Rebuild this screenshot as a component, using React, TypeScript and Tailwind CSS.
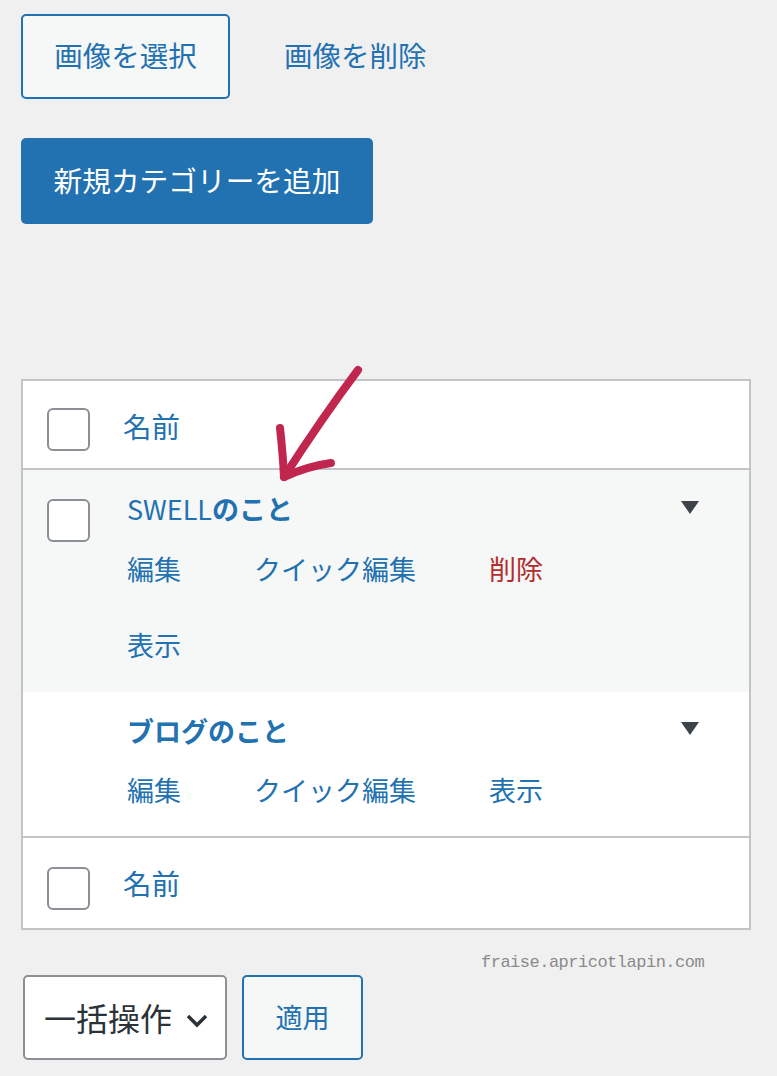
import React from "react";

const font = { fontFamily: '"Noto Sans CJK JP", "Noto Sans", sans-serif' };

function Checkbox() {
  return <div className="w-[43px] h-[43px] border-2 border-[#8c8f94] rounded-[6px] bg-white shrink-0" />;
}

function Triangle() {
  return (
    <div className="absolute right-[50px] w-0 h-0 border-l-[9px] border-r-[9px] border-t-[13px] border-l-transparent border-r-transparent border-t-[#3c434a]" />
  );
}

export default function App() {
  return (
    <div style={font} className="relative w-[777px] min-h-[1076px] bg-[#f0f0f1] pl-[21px] pt-[14px] pb-[16px]">
      {/* top buttons */}
      <div className="flex items-center">
        <button className="w-[209px] h-[85px] rounded-[5px] border-2 border-[#2271b1] bg-[#f6f7f7] text-[#2271b1] text-[28.5px] leading-none pb-[3px]">
          画像を選択
        </button>
        <span className="ml-[54px] text-[#2271b1] text-[28.5px] leading-none -mt-[3px]">画像を削除</span>
      </div>
      <button className="mt-[39px] w-[352px] h-[86px] rounded-[5px] bg-[#2271b1] text-white text-[28.7px] leading-none pb-[2px]">
        新規カテゴリーを追加
      </button>

      {/* table */}
      <div className="mt-[155px] w-[730px] border-2 border-[#c3c4c7] bg-white">
        <div className="h-[89px] flex items-start pt-[27px] pl-[24px] border-b-2 border-[#c3c4c7]">
          <Checkbox />
          <span className="ml-[33px] mt-[4px] text-[#2271b1] text-[28.5px] leading-none">名前</span>
        </div>

        {/* row 1 */}
        <div className="relative flex bg-[#f6f7f7] h-[222px] pl-[24px]">
          <div className="pt-[29px]">
            <Checkbox />
          </div>
          <div className="ml-[37px] pt-[18px] flex flex-col">
            <div className="h-[40px] flex items-center text-[#2271b1] text-[27px] leading-none">
              <span className="font-normal">SWELL</span>
              <span className="font-bold">のこと</span>
            </div>
            <div className="mt-[20px] h-[40px] flex items-center text-[27px] leading-none gap-[73px]">
              <span className="text-[#2271b1]">編集</span>
              <span className="text-[#2271b1]">クイック編集</span>
              <span className="text-[#b32d2e]">削除</span>
            </div>
            <div className="mt-[36px] h-[40px] flex items-center text-[27px] leading-none text-[#2271b1]">
              表示
            </div>
          </div>
          <div className="absolute top-[31px] right-0">
            <Triangle />
          </div>
        </div>

        {/* row 2 */}
        <div className="relative flex bg-white h-[146px] pl-[104px] border-b-2 border-[#c3c4c7]">
          <div className="pt-[18px] flex flex-col">
            <div className="h-[40px] flex items-center text-[#2271b1] text-[27px] leading-none font-bold">
              ブログのこと
            </div>
            <div className="mt-[19px] h-[40px] flex items-center text-[27px] leading-none gap-[73px] text-[#2271b1]">
              <span>編集</span>
              <span>クイック編集</span>
              <span>表示</span>
            </div>
          </div>
          <div className="absolute top-[30px] right-0">
            <Triangle />
          </div>
        </div>

        <div className="h-[90px] flex items-start pt-[29px] pl-[24px]">
          <Checkbox />
          <span className="ml-[33px] mt-[2px] text-[#2271b1] text-[28.5px] leading-none">名前</span>
        </div>
      </div>

      {/* bulk actions */}
      <div className="mt-[45px] flex items-center pl-[2px]">
        <div className="w-[204px] h-[85px] border-2 border-[#8c8f94] rounded-[5px] bg-white flex items-center pl-[19px] pr-[16px] justify-between">
          <span className="text-[#2c3338] text-[32px] leading-none -mt-[2px]">一括操作</span>
          <svg width="24" height="18" viewBox="0 0 24 18" className="mt-[5px]">
            <path d="M3 5 L12 14 L21 5" fill="none" stroke="#2c3338" strokeWidth="3.5" />
          </svg>
        </div>
        <button className="ml-[15px] w-[121px] h-[85px] border-2 border-[#2271b1] rounded-[5px] bg-[#f6f7f7] text-[#2271b1] text-[27px] leading-none pb-[2px]">
          適用
        </button>
      </div>

      {/* watermark overlay */}
      <span
        className="absolute left-[481px] top-[954px] text-[#8a8a8a] text-[17px] leading-none tracking-[-0.5px]"
        style={{ fontFamily: '"Liberation Mono", monospace' }}
      >
        fraise.apricotlapin.com
      </span>

      {/* red arrow annotation */}
      <svg className="absolute left-[270px] top-[360px]" width="100" height="130" viewBox="0 0 100 130">
        <path d="M88 10 Q52 58 14 117" fill="none" stroke="#c1264e" strokeWidth="8" strokeLinecap="round" />
        <path d="M10 68 Q13 95 14 117 Q38 106 61 103" fill="none" stroke="#c1264e" strokeWidth="8" strokeLinecap="round" strokeLinejoin="round" />
      </svg>
    </div>
  );
}
